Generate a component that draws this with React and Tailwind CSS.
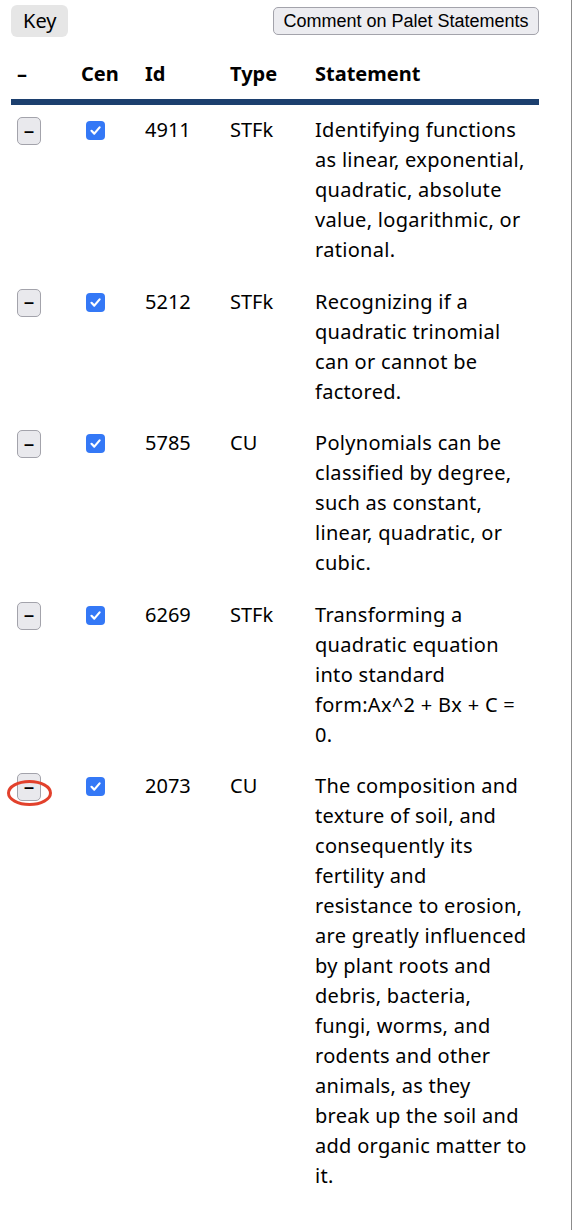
import React from 'react'

const filas = [
  { id: '4911', tipo: 'STFk', lineas: ['Identifying functions', 'as linear, exponential,', 'quadratic, absolute', 'value, logarithmic, or', 'rational.'] },
  { id: '5212', tipo: 'STFk', lineas: ['Recognizing if a', 'quadratic trinomial', 'can or cannot be', 'factored.'] },
  { id: '5785', tipo: 'CU', lineas: ['Polynomials can be', 'classified by degree,', 'such as constant,', 'linear, quadratic, or', 'cubic.'] },
  { id: '6269', tipo: 'STFk', lineas: ['Transforming a', 'quadratic equation', 'into standard', 'form:Ax^2 + Bx + C =', '0.'] },
  {
    id: '2073',
    tipo: 'CU',
    marcado: true,
    lineas: [
      'The composition and',
      'texture of soil, and',
      'consequently its',
      'fertility and',
      'resistance to erosion,',
      'are greatly influenced',
      'by plant roots and',
      'debris, bacteria,',
      'fungi, worms, and',
      'rodents and other',
      'animals, as they',
      'break up the soil and',
      'add organic matter to',
      'it.',
    ],
  },
]

function Check() {
  return (
    <span className="mt-[6px] ml-[11px] flex h-[19px] w-[19px] items-center justify-center rounded-[4px] bg-[#3478f6]">
      <svg width="13" height="13" viewBox="0 0 13 13" fill="none">
        <path d="M2.5 6.8 L5.3 9.6 L10.6 3.4" stroke="white" strokeWidth="2.2" strokeLinecap="round" strokeLinejoin="round" />
      </svg>
    </span>
  )
}

function Quitar({ marcado }) {
  return (
    <div className="relative ml-[6px] mt-[2px] w-[24px]">
      <button className="flex h-[28px] w-[24px] items-center justify-center rounded-[5px] border border-[#a3a3ab] bg-[#e9e9ed] pb-[1px] font-['Liberation_Sans',sans-serif] text-[18px] font-bold leading-none text-black">
        –
      </button>
      {marcado && (
        <svg className="absolute left-[-10px] top-[6px]" width="46" height="28" viewBox="0 0 46 28" fill="none">
          <ellipse cx="22.5" cy="14" rx="21" ry="11.5" stroke="#e2412c" strokeWidth="3" />
        </svg>
      )}
    </div>
  )
}

export default function App() {
  return (
    <div className="min-h-[1230px] w-[572px] border-r border-[#8c8c8c] bg-white pt-[5px] font-['Noto_Sans',sans-serif] text-black">
      <div className="mx-[11px] flex w-[528px] items-start justify-between">
        <button className="h-[32px] rounded-[6px] bg-[#e6e6e6] px-[12px] text-[20px] leading-[32px]">Key</button>
        <button className="mt-[2px] h-[28px] w-[266px] rounded-[5px] border border-[#a3a3ab] bg-[#ececf0] font-['Liberation_Sans',sans-serif] text-[18px] leading-none">
          Comment on Palet Statements
        </button>
      </div>

      <div className="mx-[11px] mt-[22px] w-[528px]">
        <div className="grid grid-cols-[64px_64px_85px_85px_230px] border-b-[6px] border-[#1c3f6e] pb-[10px] text-[20px] font-bold leading-[30px]">
          <div className="pl-[6px]">–</div>
          <div className="pl-[6px]">Cen</div>
          <div className="pl-[6px]">Id</div>
          <div className="pl-[6px]">Type</div>
          <div className="pl-[6px]">Statement</div>
        </div>

        {filas.map((f) => (
          <div key={f.id} className="grid grid-cols-[64px_64px_85px_85px_230px] items-start pt-[10px] pb-[11.5px] text-[20px] leading-[30px]">
            <Quitar marcado={f.marcado} />
            <div>
              <Check />
            </div>
            <div className="pl-[6px]">{f.id}</div>
            <div className="pl-[6px]">{f.tipo}</div>
            <div className="whitespace-nowrap pl-[6px] tracking-[0.3px]">
              {f.lineas.map((l, i) => (
                <div key={i}>{l}</div>
              ))}
            </div>
          </div>
        ))}
      </div>
    </div>
  )
}
